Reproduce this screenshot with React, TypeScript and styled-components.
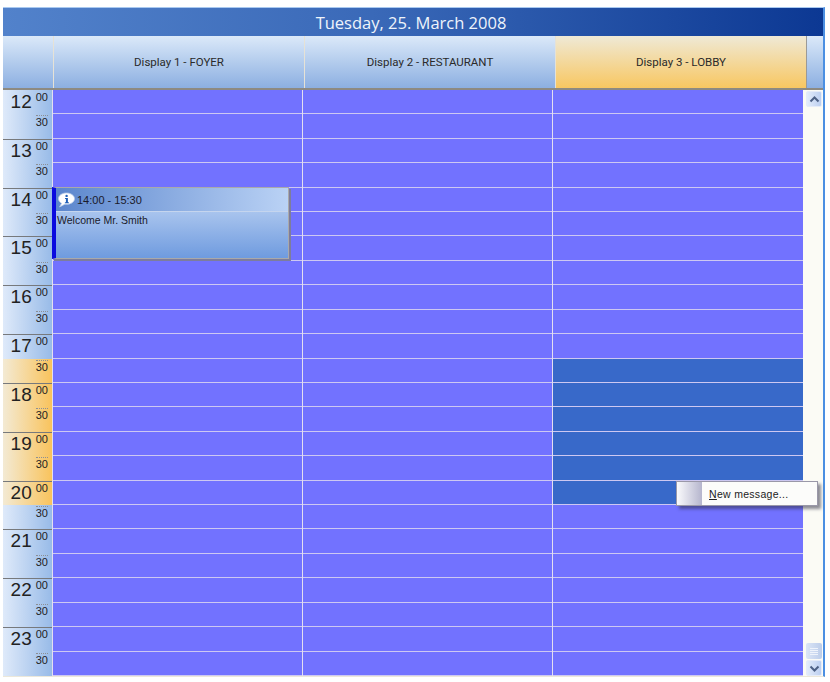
import React from "react";
import styled, { createGlobalStyle } from "styled-components";

const GlobalStyle = createGlobalStyle`
  html, body {
    margin: 0;
    padding: 0;
    background: #ffffff;
  }
  body {
    font-family: "Liberation Sans", Arial, sans-serif;
  }
`;

const displays = [
  { name: "Display 1 - FOYER", active: false },
  { name: "Display 2 - RESTAURANT", active: false },
  { name: "Display 3 - LOBBY", active: true },
];

// half hour slots from 12:00 to 23:30
const slots = Array.from({ length: 24 }, (_, i) => ({
  hour: 12 + Math.floor(i / 2),
  half: i % 2 === 1,
  working: i >= 11 && i <= 16,
}));

const App = () => {
  return (
    <Frame>
      <GlobalStyle />
      <TitleBar>Tuesday, 25. March 2008</TitleBar>
      <HeaderRow>
        <Corner />
        {displays.map((d) => (
          <HeaderCell key={d.name} $active={d.active}>
            {d.name}
          </HeaderCell>
        ))}
        <HeaderEnd />
      </HeaderRow>
      <Body>
        <TimeColumn>
          {slots.map((s, i) => (
            <TimeSlot key={i} $half={s.half} $working={s.working} $first={i === 0}>
              {s.half ? (
                <HalfLabel>30</HalfLabel>
              ) : (
                <>
                  <HourLabel>{s.hour}</HourLabel>
                  <Minutes>00</Minutes>
                </>
              )}
            </TimeSlot>
          ))}
        </TimeColumn>
        <Days>
          {displays.map((d) => (
            <Day key={d.name}>
              {slots.map((s, i) => (
                <Cell key={i} $selected={d.active && s.working} />
              ))}
            </Day>
          ))}
          <Appointment>
            <AppointmentHead>
              <svg width="19" height="16" viewBox="0 0 19 16">
                <path
                  d="M9.5 1C5 1 1.5 3.4 1.5 6.7c0 1.9 1.2 3.5 3.1 4.6L2.6 15l5.2-2.8c.5.1 1.1.1 1.7.1 4.5 0 8-2.5 8-5.6S14 1 9.5 1z"
                  fill="#ffffff"
                  stroke="#b9cdea"
                  strokeWidth="0.8"
                />
                <circle cx="9.6" cy="3.9" r="1.2" fill="#1f5fb8" />
                <path d="M8 6h2.9v4.2h1v1H7.9v-1h1V7H8z" fill="#1f5fb8" />
              </svg>
              <span>14:00 - 15:30</span>
            </AppointmentHead>
            <AppointmentText>Welcome Mr. Smith</AppointmentText>
          </Appointment>
        </Days>
        <Scrollbar>
          <ScrollButton>
            <svg width="11" height="7" viewBox="0 0 11 7">
              <path d="M1.5 5.5l4-4 4 4" fill="none" stroke="#4d6185" strokeWidth="2" />
            </svg>
          </ScrollButton>
          <ScrollTrack />
          <ScrollThumb>
            <Grip />
            <Grip />
            <Grip />
            <Grip />
          </ScrollThumb>
          <ScrollButton>
            <svg width="11" height="7" viewBox="0 0 11 7">
              <path d="M1.5 1.5l4 4 4-4" fill="none" stroke="#4d6185" strokeWidth="2" />
            </svg>
          </ScrollButton>
        </Scrollbar>
      </Body>
      <ContextMenu>
        <MenuStrip />
        <MenuLabel>
          <u>N</u>ew message...
        </MenuLabel>
      </ContextMenu>
    </Frame>
  );
};

const Frame = styled.div`
  position: relative;
  box-sizing: border-box;
  width: 822px;
  margin: 7px 0 0 3px;
  border-top: 1px solid #a9c9f0;
  border-right: 2px solid #4b8fe2;
  border-bottom: 1px solid #ece8da;
  background: #fbfbf5;
`;

const TitleBar = styled.div`
  height: 28px;
  display: flex;
  align-items: center;
  justify-content: center;
  background: linear-gradient(to right, #5282cb, #3a69b8 45%, #0c3893);
  color: #eef4fb;
  font-family: "Open Sans", sans-serif;
  font-size: 16.5px;
  padding-right: 4px;
  box-sizing: border-box;
`;

const HeaderRow = styled.div`
  display: flex;
  height: 54px;
  border-bottom: 2px solid #8d8a82;
  box-sizing: border-box;
`;

const blueHeader = `linear-gradient(to bottom, #dbe9f9, #8cafe1)`;

const Corner = styled.div`
  flex: 0 0 50px;
  background: ${blueHeader};
`;

const HeaderCell = styled.div<{ $active: boolean }>`
  flex: 0 0 251px;
  display: flex;
  align-items: center;
  justify-content: center;
  box-sizing: border-box;
  border-left: 1px solid #e6e2d6;
  color: #2a2a2a;
  font-family: Roboto, sans-serif;
  font-size: 11.5px;
  background: ${(p) =>
    p.$active
      ? "linear-gradient(to bottom, #efe9d6, #f8c761)"
      : "linear-gradient(to bottom, #dbe9f9, #8cafe1)"};
`;

const HeaderEnd = styled.div`
  flex: 1;
  border-left: 1px solid #9a9a98;
  background: ${blueHeader};
`;

const Body = styled.div`
  display: flex;
  height: 586px;
`;

const TimeColumn = styled.div`
  flex: 0 0 49px;
  display: grid;
  grid-template-rows: repeat(24, 1fr);
`;

const TimeSlot = styled.div<{ $half: boolean; $working: boolean; $first: boolean }>`
  display: flex;
  align-items: flex-start;
  justify-content: flex-end;
  padding-right: 4px;
  box-sizing: border-box;
  color: #222222;
  background: ${(p) =>
    p.$working
      ? "linear-gradient(to right, #f3ead4, #f9c35c)"
      : "linear-gradient(to right, #dfeafa, #98bbe8)"};
  border-top: 1px solid ${(p) => (p.$first || p.$half ? "transparent" : "#77797c")};
`;

const HourLabel = styled.span`
  font-size: 19px;
  line-height: 22px;
  margin-right: 4px;
`;

const Minutes = styled.span`
  font-size: 11px;
  line-height: 12px;
`;

const HalfLabel = styled.span`
  font-size: 11px;
  line-height: 12px;
  border-top: 1px dotted #8c8f94;
`;

const Days = styled.div`
  position: relative;
  display: flex;
  flex: 0 0 751px;
`;

const Day = styled.div`
  flex: 0 0 250px;
  box-sizing: border-box;
  display: grid;
  grid-template-rows: repeat(24, 1fr);
  border-left: 1px solid #e4dff0;
  &:nth-child(3) {
    flex: 0 0 251px;
  }
`;

const Cell = styled.div<{ $selected: boolean }>`
  box-sizing: border-box;
  background: ${(p) => (p.$selected ? "#3869c9" : "#7272ff")};
  border-bottom: 1px solid #cdc8f2;
`;

const Appointment = styled.div`
  position: absolute;
  left: 0;
  top: 97px;
  width: 237px;
  height: 72px;
  box-sizing: border-box;
  border: 1px solid #a9a9ab;
  border-left: 4px solid #0a0adf;
  box-shadow: 2px 2px 0 #7d7d9c;
  background: linear-gradient(to bottom, #c6d9f5, #6f9bdf);
  color: #1a1a2a;
`;

const AppointmentHead = styled.div`
  display: flex;
  align-items: center;
  gap: 1px;
  height: 24px;
  padding-left: 1px;
  box-sizing: border-box;
  border-bottom: 1px solid #c5d5ee;
  background: linear-gradient(to right, #5b86cd, #bad2f5);
  font-size: 11px;
`;

const AppointmentText = styled.div`
  padding: 2px 0 0 1px;
  font-size: 10.5px;
`;

const Scrollbar = styled.div`
  flex: 1;
  display: flex;
  flex-direction: column;
  padding: 1px 1px 0 3px;
  background: #fbfbf5;
`;

const ScrollButton = styled.div`
  flex: 0 0 16px;
  display: flex;
  align-items: center;
  justify-content: center;
  border-radius: 2px;
  background: linear-gradient(to right, #e3ecfb, #bccff0);
  border: 1px solid #e6ecf8;
  box-sizing: border-box;
`;

const ScrollTrack = styled.div`
  flex: 1;
`;

const ScrollThumb = styled.div`
  flex: 0 0 16px;
  display: flex;
  flex-direction: column;
  justify-content: center;
  gap: 1px;
  padding: 0 4px;
  margin-bottom: 1px;
  box-sizing: border-box;
  border-radius: 2px;
  background: linear-gradient(to right, #dbe5f6, #bccdea);
`;

const Grip = styled.div`
  height: 1px;
  background: #eef3fb;
`;

const ContextMenu = styled.div`
  position: absolute;
  left: 673px;
  top: 473px;
  width: 142px;
  height: 25px;
  display: flex;
  box-sizing: border-box;
  border: 1px solid #9a98a8;
  background: #fcfcfa;
  box-shadow: 3px 3px 3px rgba(50, 50, 70, 0.55);
`;

const MenuStrip = styled.div`
  flex: 0 0 25px;
  background: linear-gradient(to right, #fafafc, #b5b5cd);
`;

const MenuLabel = styled.div`
  padding-left: 7px;
  display: flex;
  align-items: center;
  white-space: pre;
  font-size: 10.5px;
  color: #222222;
  letter-spacing: 0.3px;
  u {
    text-decoration: underline;
  }
`;

export default App;
